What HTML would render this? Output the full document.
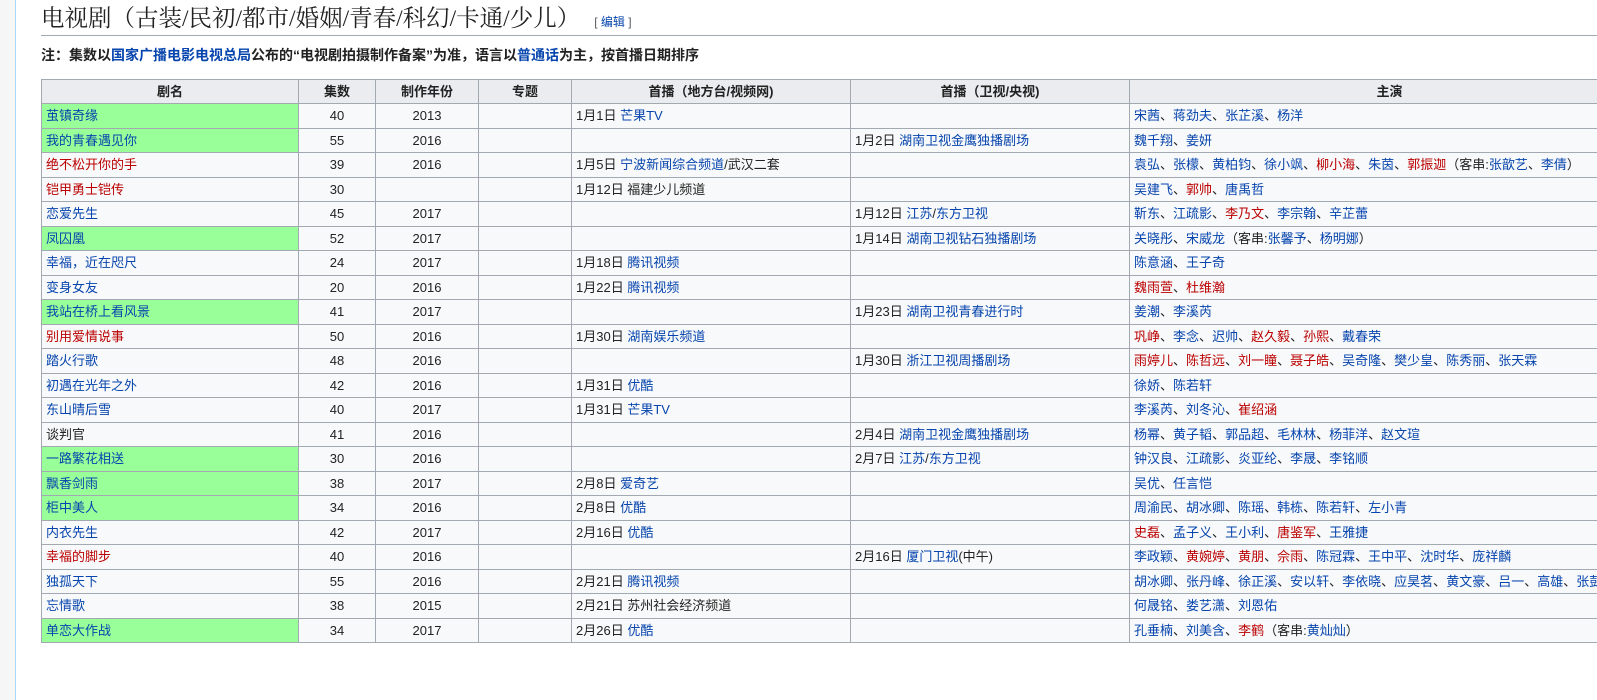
<!DOCTYPE html>
<html><head><meta charset="utf-8"><style>
html,body{margin:0;padding:0;width:1597px;height:647px;overflow:hidden;background:#f6f6f6}
#c{position:absolute;left:15px;top:0;width:1600px;height:700px;background:#fff;border-left:1px solid #a7d7f9}
.f{font-family:"Liberation Sans","Noto Sans CJK SC",sans-serif}
h2{position:absolute;left:25px;top:4px;margin:0;width:1600px;font:normal 23.5px "Liberation Serif","Noto Serif CJK SC",serif;color:#222;border-bottom:1px solid #a2a9b1;height:31px;line-height:30px}
h2 small{font:12px "Liberation Sans","Noto Sans CJK SC",sans-serif;color:#54595d;margin-left:14px}
h2 small a{color:#0645ad}
.note{position:absolute;left:25px;top:45px;font-weight:bold;font-size:14px;color:#222}
a{color:#0645ad;text-decoration:none}
.r{color:#ba0000}
table{position:absolute;left:25px;top:79px;width:1608px;border-collapse:collapse;table-layout:fixed;font-size:13px;color:#222;background:#f8f9fa}
td,th{border:1px solid #a2a9b1;padding:0 4px;white-space:nowrap;overflow:hidden;line-height:16px}
th{background:#eaecf0;font-weight:bold;height:23px}
td.c{text-align:center}
td.g{background:#9f9}
tr.a td{height:24px}tr.b td{height:23px}
</style></head><body class="f"><div id="c" class="f">
<h2>电视剧（古装/民初/都市/婚姻/青春/科幻/卡通/少儿）<small>[ <a>编辑</a> ]</small></h2>
<div class="note">注：集数以<a>国家广播电影电视总局</a>公布的“电视剧拍摄制作备案”为准，语言以<a>普通话</a>为主，按首播日期排序</div>
<table>
<colgroup><col style="width:257px"><col style="width:77px"><col style="width:103px"><col style="width:93px"><col style="width:279px"><col style="width:279px"><col style="width:520px"></colgroup>
<tr><th>剧名</th><th>集数</th><th>制作年份</th><th>专题</th><th>首播（地方台/视频网)</th><th>首播（卫视/央视)</th><th>主演</th></tr>
<tr class="a"><td class="g"><a>茧镇奇缘</a></td><td class="c">40</td><td class="c">2013</td><td></td><td>1月1日 <a>芒果TV</a></td><td></td><td><a>宋茜</a>、<a>蒋劲夫</a>、<a>张芷溪</a>、<a>杨洋</a></td></tr>
<tr class="b"><td class="g"><a>我的青春遇见你</a></td><td class="c">55</td><td class="c">2016</td><td></td><td></td><td>1月2日 <a>湖南卫视金鹰独播剧场</a></td><td><a>魏千翔</a>、<a>姜妍</a></td></tr>
<tr class="a"><td><a class="r">绝不松开你的手</a></td><td class="c">39</td><td class="c">2016</td><td></td><td>1月5日 <a>宁波新闻综合频道</a>/武汉二套</td><td></td><td><a>袁弘</a>、<a>张檬</a>、<a>黄柏钧</a>、<a>徐小飒</a>、<a class="r">柳小海</a>、<a>朱茵</a>、<a class="r">郭振迦</a>（客串:<a>张歆艺</a>、<a>李倩</a>）</td></tr>
<tr class="b"><td><a class="r">铠甲勇士铠传</a></td><td class="c">30</td><td class="c"></td><td></td><td>1月12日 福建少儿频道</td><td></td><td><a>吴建飞</a>、<a class="r">郭帅</a>、<a>唐禹哲</a></td></tr>
<tr class="a"><td><a>恋爱先生</a></td><td class="c">45</td><td class="c">2017</td><td></td><td></td><td>1月12日 <a>江苏</a>/<a>东方卫视</a></td><td><a>靳东</a>、<a>江疏影</a>、<a class="r">李乃文</a>、<a>李宗翰</a>、<a>辛芷蕾</a></td></tr>
<tr class="b"><td class="g"><a>凤囚凰</a></td><td class="c">52</td><td class="c">2017</td><td></td><td></td><td>1月14日 <a>湖南卫视钻石独播剧场</a></td><td><a>关晓彤</a>、<a>宋威龙</a>（客串:<a>张馨予</a>、<a>杨明娜</a>）</td></tr>
<tr class="a"><td><a>幸福，近在咫尺</a></td><td class="c">24</td><td class="c">2017</td><td></td><td>1月18日 <a>腾讯视频</a></td><td></td><td><a>陈意涵</a>、<a>王子奇</a></td></tr>
<tr class="b"><td><a>变身女友</a></td><td class="c">20</td><td class="c">2016</td><td></td><td>1月22日 <a>腾讯视频</a></td><td></td><td><a class="r">魏雨萱</a>、<a class="r">杜维瀚</a></td></tr>
<tr class="a"><td class="g"><a>我站在桥上看风景</a></td><td class="c">41</td><td class="c">2017</td><td></td><td></td><td>1月23日 <a>湖南卫视青春进行时</a></td><td><a>姜潮</a>、<a>李溪芮</a></td></tr>
<tr class="b"><td><a class="r">别用爱情说事</a></td><td class="c">50</td><td class="c">2016</td><td></td><td>1月30日 <a>湖南娱乐频道</a></td><td></td><td><a class="r">巩峥</a>、<a>李念</a>、<a>迟帅</a>、<a class="r">赵久毅</a>、<a class="r">孙熙</a>、<a>戴春荣</a></td></tr>
<tr class="a"><td><a>踏火行歌</a></td><td class="c">48</td><td class="c">2016</td><td></td><td></td><td>1月30日 <a>浙江卫视周播剧场</a></td><td><a class="r">雨婷儿</a>、<a class="r">陈哲远</a>、<a class="r">刘一瞳</a>、<a class="r">聂子皓</a>、<a>吴奇隆</a>、<a>樊少皇</a>、<a>陈秀丽</a>、<a>张天霖</a></td></tr>
<tr class="b"><td><a>初遇在光年之外</a></td><td class="c">42</td><td class="c">2016</td><td></td><td>1月31日 <a>优酷</a></td><td></td><td><a>徐娇</a>、<a>陈若轩</a></td></tr>
<tr class="a"><td><a>东山晴后雪</a></td><td class="c">40</td><td class="c">2017</td><td></td><td>1月31日 <a>芒果TV</a></td><td></td><td><a>李溪芮</a>、<a>刘冬沁</a>、<a class="r">崔绍涵</a></td></tr>
<tr class="b"><td>谈判官</td><td class="c">41</td><td class="c">2016</td><td></td><td></td><td>2月4日 <a>湖南卫视金鹰独播剧场</a></td><td><a>杨幂</a>、<a>黄子韬</a>、<a>郭品超</a>、<a>毛林林</a>、<a>杨菲洋</a>、<a>赵文瑄</a></td></tr>
<tr class="a"><td class="g"><a>一路繁花相送</a></td><td class="c">30</td><td class="c">2016</td><td></td><td></td><td>2月7日 <a>江苏</a>/<a>东方卫视</a></td><td><a>钟汉良</a>、<a>江疏影</a>、<a>炎亚纶</a>、<a>李晟</a>、<a>李铭顺</a></td></tr>
<tr class="b"><td class="g"><a>飘香剑雨</a></td><td class="c">38</td><td class="c">2017</td><td></td><td>2月8日 <a>爱奇艺</a></td><td></td><td><a>吴优</a>、<a>任言恺</a></td></tr>
<tr class="a"><td class="g"><a>柜中美人</a></td><td class="c">34</td><td class="c">2016</td><td></td><td>2月8日 <a>优酷</a></td><td></td><td><a>周渝民</a>、<a>胡冰卿</a>、<a>陈瑶</a>、<a>韩栋</a>、<a>陈若轩</a>、<a>左小青</a></td></tr>
<tr class="b"><td><a>内衣先生</a></td><td class="c">42</td><td class="c">2017</td><td></td><td>2月16日 <a>优酷</a></td><td></td><td><a class="r">史磊</a>、<a>孟子义</a>、<a>王小利</a>、<a class="r">唐鉴军</a>、<a>王雅捷</a></td></tr>
<tr class="a"><td><a class="r">幸福的脚步</a></td><td class="c">40</td><td class="c">2016</td><td></td><td></td><td>2月16日 <a>厦门卫视</a>(中午)</td><td><a>李政颖</a>、<a class="r">黄婉婷</a>、<a class="r">黄朋</a>、<a class="r">佘雨</a>、<a>陈冠霖</a>、<a>王中平</a>、<a>沈时华</a>、<a>庞祥麟</a></td></tr>
<tr class="b"><td><a>独孤天下</a></td><td class="c">55</td><td class="c">2016</td><td></td><td>2月21日 <a>腾讯视频</a></td><td></td><td><a>胡冰卿</a>、<a>张丹峰</a>、<a>徐正溪</a>、<a>安以轩</a>、<a>李依晓</a>、<a>应昊茗</a>、<a>黄文豪</a>、<a>吕一</a>、<a>高雄</a>、<a>张彭</a></td></tr>
<tr class="a"><td><a>忘情歌</a></td><td class="c">38</td><td class="c">2015</td><td></td><td>2月21日 苏州社会经济频道</td><td></td><td><a>何晟铭</a>、<a>娄艺潇</a>、<a>刘恩佑</a></td></tr>
<tr class="b"><td class="g"><a>单恋大作战</a></td><td class="c">34</td><td class="c">2017</td><td></td><td>2月26日 <a>优酷</a></td><td></td><td><a>孔垂楠</a>、<a>刘美含</a>、<a class="r">李鹤</a>（客串:<a>黄灿灿</a>）</td></tr>
</table>
</div></body></html>
